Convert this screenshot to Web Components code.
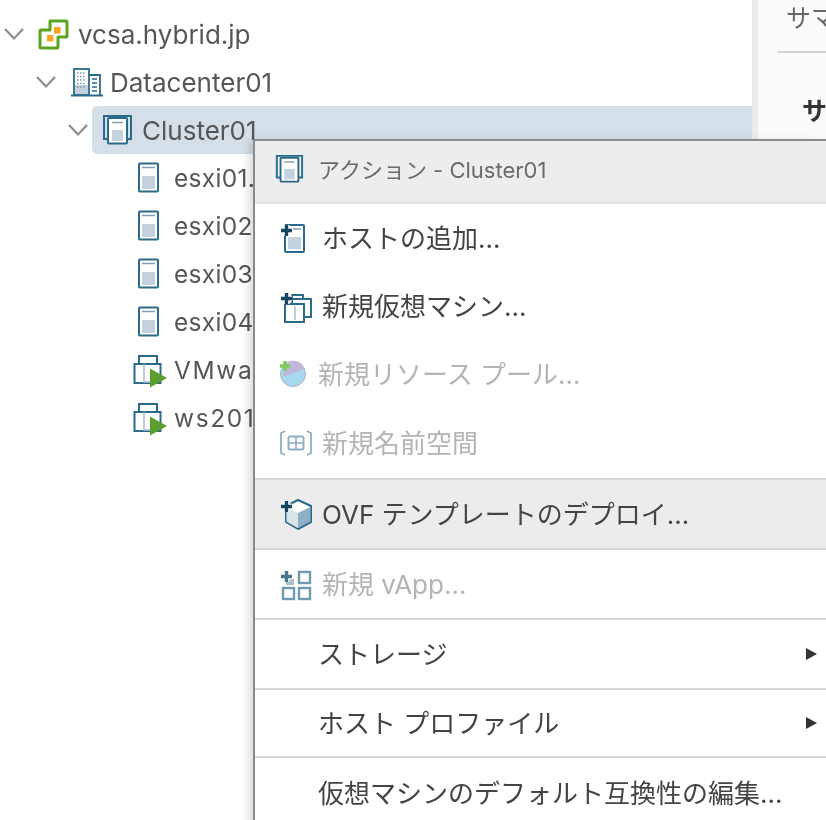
<!DOCTYPE html>
<html>
<head>
<meta charset="utf-8">
<title>vSphere Client</title>
<style>
  html, body { margin: 0; height: 100%; overflow: hidden; background: #fff; }
  body { font-family: "Inter", "Noto Sans CJK JP", sans-serif; filter: blur(.5px); }
</style>
</head>
<body>
<vc-shell>
  <vc-tree slot="tree">
    <vc-tree-row level="0" icon="vcsa" expanded>vcsa.hybrid.jp</vc-tree-row>
    <vc-tree-row level="1" icon="datacenter" expanded>Datacenter01</vc-tree-row>
    <vc-tree-row level="2" icon="cluster" expanded selected>Cluster01</vc-tree-row>
    <vc-tree-row level="3" icon="host">esxi01.hybrid.jp</vc-tree-row>
    <vc-tree-row level="3" icon="host">esxi02.hybrid.jp</vc-tree-row>
    <vc-tree-row level="3" icon="host">esxi03.hybrid.jp</vc-tree-row>
    <vc-tree-row level="3" icon="host">esxi04.hybrid.jp</vc-tree-row>
    <vc-tree-row level="3" icon="vm">VMware vCenter Server</vc-tree-row>
    <vc-tree-row level="3" icon="vm">ws2019</vc-tree-row>
  </vc-tree>
  <vc-summary slot="side"></vc-summary>
  <vc-menu slot="menu" heading="アクション - Cluster01">
    <vc-menu-item icon="addhost" h="68">ホストの追加...</vc-menu-item>
    <vc-menu-item icon="addvm" h="68">新規仮想マシン...</vc-menu-item>
    <vc-menu-item icon="pool" h="68" tight disabled>新規リソース プール...</vc-menu-item>
    <vc-menu-item icon="namespace" h="70" disabled>新規名前空間</vc-menu-item>
    <vc-menu-item icon="ovf" h="72" hover>OVF テンプレートのデプロイ...</vc-menu-item>
    <vc-menu-item icon="vapp" h="70" sep disabled>新規 vApp...</vc-menu-item>
    <vc-menu-item h="70" tight sep submenu>ストレージ</vc-menu-item>
    <vc-menu-item h="68" tight sep submenu>ホスト プロファイル</vc-menu-item>
    <vc-menu-item h="70" tight>仮想マシンのデフォルト互換性の編集...</vc-menu-item>
  </vc-menu>
</vc-shell>

<script>
const BLUE = '#2a6a8a';
const PALE = '#c3d2dc';
const hostBody = `<rect x="6" y="1.5" width="19" height="28" rx="1" fill="#fff" stroke="${BLUE}" stroke-width="2"/>
  <path d="M9 5.5h13" stroke="#7d9fb3" stroke-width="1.5"/><rect x="9" y="14" width="13" height="13" fill="${PALE}"/>`;
const plus = c => `<path d="M5.5 0v11M0 5.5h11" stroke="#fff" stroke-width="6"/><path d="M5.5 0v11M0 5.5h11" stroke="${c}" stroke-width="3.4"/>`;

const ICONS = {
  vcsa: `<path d="M13 3H29a1 1 0 0 1 1 1V18a1 1 0 0 1-1 1H21V29a1 1 0 0 1-1 1H4a1 1 0 0 1-1-1V13a1 1 0 0 1 1-1H13Z" fill="#fff" stroke="#5aa41f" stroke-width="3" stroke-linejoin="round"/>
    <rect x="17" y="9" width="6.5" height="6.5" fill="#f4a21c"/><rect x="10" y="17" width="6.5" height="6.5" fill="#f9a825"/>`,
  datacenter: `<rect x="5" y="3" width="15" height="26" fill="#fff" stroke="${BLUE}" stroke-width="1.8"/>
    <rect x="6" y="19" width="13" height="9" fill="${PALE}"/>
    <path d="M8 7h9M8 10.5h9M8 14h9M8 17.5h9M8 21h9" stroke="#7d9fb3" stroke-width="1.6" stroke-dasharray="1.6 1.4"/>
    <path d="M20 9h11v20" fill="none" stroke="${BLUE}" stroke-width="1.8"/>
    <path d="M23 13h5M23 17h5M23 21h5M23 25h5" stroke="${BLUE}" stroke-width="1.5"/>
    <path d="M2 29.5h32" stroke="${BLUE}" stroke-width="2"/>`,
  cluster: `<path d="M7 25H3V2h27v23h-4" fill="none" stroke="${BLUE}" stroke-width="2"/>
    <rect x="7" y="4" width="19" height="25.5" rx="1" fill="#fff" stroke="${BLUE}" stroke-width="2"/>
    <path d="M11 8.5h11" stroke="#7d9fb3" stroke-width="1.5"/><rect x="11" y="16" width="11" height="11" fill="${PALE}"/>`,
  host: hostBody,
  vm: `<path d="M6 10V2h18v8" fill="none" stroke="${BLUE}" stroke-width="2"/>
    <rect x="1.5" y="10" width="26" height="19" fill="none" stroke="${BLUE}" stroke-width="2"/>
    <path d="M11 10v19M11 28h6" fill="none" stroke="#a9bfcc" stroke-width="1.5"/>
    <path d="M17 14.5 34 24 17 33.5Z" fill="#5c9e2e"/>`,
  addhost: `<rect x="7" y="3" width="19" height="27" rx="1" fill="#fff" stroke="${BLUE}" stroke-width="2"/>
    <rect x="10" y="15" width="13" height="12" fill="${PALE}"/><path d="M15 7h8" stroke="#7d9fb3" stroke-width="1.5"/>
    <g transform="translate(3 3)">${plus('#14465f')}</g>`,
  addvm: `<path d="M14 14V5h11v4" fill="none" stroke="${BLUE}" stroke-width="2"/>
    <rect x="14" y="9" width="19" height="18" fill="none" stroke="${BLUE}" stroke-width="2"/>
    <rect x="7" y="14" width="19" height="18" fill="#fff" stroke="${BLUE}" stroke-width="2"/>
    <path d="M17 16v14" stroke="#a9bfcc" stroke-width="1.5"/>
    <g transform="translate(3 3)">${plus('#14465f')}</g>`,
  pool: `<circle cx="15" cy="16" r="12.5" fill="#a8d8f0" stroke="#a8b6c8" stroke-width="1"/>
    <path d="M4 19 27 11A12.5 12.5 0 0 0 8 5Z" fill="#c0b8d8"/>
    <path d="M7 3v10M2 8h10" stroke="#7ecb5c" stroke-width="3.4"/>`,
  namespace: `<path d="M7 4 3 6V26l4 2M29 4l4 2V26l-4 2" fill="none" stroke="#8fb0c2" stroke-width="1.8"/>
    <rect x="10.5" y="9.5" width="15" height="13" rx="1.5" fill="none" stroke="#8fb0c2" stroke-width="2"/>
    <path d="M18 10v12M11 16h14" stroke="#8fb0c2" stroke-width="1.6"/>`,
  ovf: `<path d="M20 2 33 8V24L20 31 8 24V8Z" fill="#fff" stroke="${BLUE}" stroke-width="2" stroke-linejoin="round"/>
    <path d="M20 15 32.5 9V23.500L20 30Z" fill="#8fb0c4"/><path d="M20 15 8.500 9V23.500L20 30Z" fill="#d8e4ea"/>
    <g transform="translate(3 3)">${plus('#14465f')}</g>`,
  vapp: `<g fill="none" stroke="#6f9ab0" stroke-width="2.4"><rect x="21" y="4" width="11" height="11"/><rect x="5" y="20" width="11" height="11"/><rect x="21" y="20" width="11" height="11"/></g>
    <rect x="8" y="11" width="8" height="6" fill="#a6bfcd"/>
    <g transform="translate(3 3)">${plus('#47768f')}</g>`
};

class VcIcon extends HTMLElement {
  constructor() {
    super();
    this.attachShadow({ mode: 'open' });
    const size = this.getAttribute('size') || 32;
    this.shadowRoot.innerHTML = `
      <style>
        :host { display: block; flex: none; width: ${size}px; height: ${size}px; }
        svg { display: block; overflow: visible; }
      </style>
      <svg width="${size}" height="${size}" viewBox="0 0 32 32">${ICONS[this.getAttribute('name')] || ''}</svg>`;
  }
}

class VcShell extends HTMLElement {
  constructor() {
    super();
    this.attachShadow({ mode: 'open' });
    this.shadowRoot.innerHTML = `
      <style>
        :host { display: grid; grid-template-columns: 752px 6px 1fr; height: 820px; position: relative; overflow: hidden; }
        .split { background: #ececec; }
        .menu { position: absolute; left: 253px; top: 139px; right: 0; }
      </style>
      <slot name="tree"></slot>
      <div class="split"></div>
      <slot name="side"></slot>
      <div class="menu"><slot name="menu"></slot></div>`;
  }
}

class VcTree extends HTMLElement {
  constructor() {
    super();
    this.attachShadow({ mode: 'open' });
    this.shadowRoot.innerHTML = `
      <style>
        :host { display: block; padding-top: 10px; background: #fff; min-width: 0; }
      </style>
      <slot></slot>`;
  }
}

class VcTreeRow extends HTMLElement {
  constructor() {
    super();
    this.attachShadow({ mode: 'open' });
    const level = +this.getAttribute('level');
    const chevron = this.hasAttribute('expanded')
      ? '<svg width="22" height="14" viewBox="0 0 22 14"><path d="M2 2 11 11.500 20 2" fill="none" stroke="#8c8c8c" stroke-width="2.200"/></svg>'
      : '';
    this.shadowRoot.innerHTML = `
      <style>
        :host { display: flex; align-items: center; height: 48px; padding-left: ${level * 32 + 3}px; font-size: 26px; color: #565656; white-space: nowrap; }
        :host([level="3"]) { font-size: 24.5px; letter-spacing: .3px; }
        :host([icon="vm"]) { letter-spacing: 1.6px; }
        .chev { width: 22px; height: 14px; margin-right: 3px; flex: none; }
        .chev svg { display: block; }
        .label { flex: 1; display: flex; align-items: center; gap: 9px; height: 100%; padding-left: 9px; border-radius: 5px 0 0 5px; }
        :host([selected]) .label { background: #d5dfe7; }
      </style>
      <div class="chev">${chevron}</div>
      <div class="label"><vc-icon name="${this.getAttribute('icon')}"></vc-icon><span><slot></slot></span></div>`;
  }
}

class VcSummary extends HTMLElement {
  constructor() {
    super();
    this.attachShadow({ mode: 'open' });
    this.shadowRoot.innerHTML = `
      <style>
        :host { display: block; background: #fafafa; padding-left: 20px; overflow: hidden; white-space: nowrap; }
        .tab { height: 51px; border-bottom: 2px solid #d4d4d4; padding-left: 8px; font-size: 25px; line-height: 37px; color: #666; }
        h3 { margin: 42px 0 0 24px; font-size: 25px; line-height: 32px; font-weight: 700; color: #333; }
      </style>
      <div class="tab">サマリ</div>
      <h3>サマリ</h3>`;
  }
}

class VcMenu extends HTMLElement {
  constructor() {
    super();
    this.attachShadow({ mode: 'open' });
    this.shadowRoot.innerHTML = `
      <style>
        :host { display: block; background: #fff; border-top: 2px solid #8a8a8a; border-left: 2px solid #8a8a8a; box-shadow: -6px 0 8px -2px rgba(0,0,0,.14); height: 700px; }
        header { display: flex; align-items: center; height: 61px; background: #ecedef; border-bottom: 2px solid #dfe1e5; padding-left: 19px; font-size: 22px; color: #6b6b6b; white-space: nowrap; }
        header vc-icon { margin-top: -5px; }
        header span { margin-left: 14px; margin-top: -7px; }
      </style>
      <header><vc-icon name="cluster" size="30"></vc-icon><span>${this.getAttribute('heading')}</span></header>
      <slot></slot>`;
  }
}

class VcMenuItem extends HTMLElement {
  constructor() {
    super();
    this.attachShadow({ mode: 'open' });
    const name = this.getAttribute('icon');
    this.shadowRoot.innerHTML = `
      <style>
        :host { display: flex; align-items: center; box-sizing: border-box; height: ${this.getAttribute('h')}px; padding: 0 9px 0 23px; font-size: 26px; color: #444; white-space: nowrap; }
        :host([disabled]) { color: #b4b4b4; }
        :host([hover]) { background: #ececec; border-top: 2px solid #d6d6d6; border-bottom: 2px solid #d6d6d6; }
        :host([sep]) { border-bottom: 2px solid #d6d6d6; }
        .slot { width: 32px; flex: none; margin-right: 12px; }
        :host([tight]) .slot { margin-right: 8px; }
        .text { flex: 1; margin-top: -3px; }
        .arrow { width: 0; height: 0; border-left: 11px solid #333; border-top: 6.500px solid transparent; border-bottom: 6.500px solid transparent; }
      </style>
      <div class="slot">${name ? `<vc-icon name="${name}"></vc-icon>` : ''}</div>
      <div class="text"><slot></slot></div>
      ${this.hasAttribute('submenu') ? '<div class="arrow"></div>' : ''}`;
  }
}

customElements.define('vc-icon', VcIcon);
customElements.define('vc-shell', VcShell);
customElements.define('vc-tree', VcTree);
customElements.define('vc-tree-row', VcTreeRow);
customElements.define('vc-summary', VcSummary);
customElements.define('vc-menu', VcMenu);
customElements.define('vc-menu-item', VcMenuItem);
</script>
</body>
</html>
